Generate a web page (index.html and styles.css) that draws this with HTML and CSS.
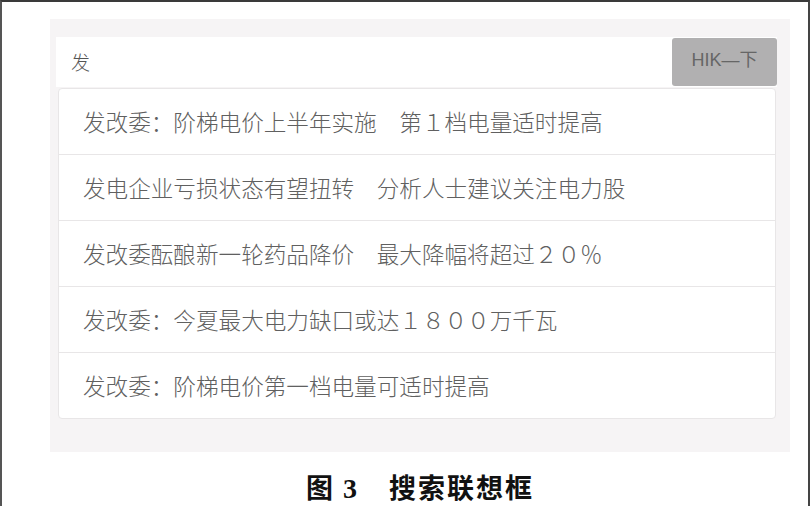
FILE: index.html
```html
<!DOCTYPE html>
<html lang="zh-CN">
<head>
    <meta charset="UTF-8">
    <title>搜索联想框</title>
    <link rel="stylesheet" href="styles.css">
</head>
<body>
    <!-- 图框 -->
    <div class="figure">
        <div class="panel">
            <!-- 搜索框 -->
            <div class="search-bar">
                <div class="search-input">发</div>
                <button class="search-btn">HIK—下</button>
            </div>
            <!-- 联想列表 -->
            <ul class="suggest-list">
                <li>发改委：阶梯电价上半年实施　第１档电量适时提高</li>
                <li>发电企业亏损状态有望扭转　分析人士建议关注电力股</li>
                <li>发改委酝酿新一轮药品降价　最大降幅将超过２０％</li>
                <li>发改委：今夏最大电力缺口或达１８００万千瓦</li>
                <li>发改委：阶梯电价第一档电量可适时提高</li>
            </ul>
        </div>
        <div class="caption"><span class="num">图 <b>3</b></span>搜索联想框</div>
    </div>
</body>
</html>
```

FILE: styles.css
```css
/* ページ全体 */
body {
    margin: 0;
    background: #fff;
    font-family: "Noto Sans CJK SC", sans-serif;
}

/* 图框 */
.figure {
    width: 810px;
    height: 506px;
    box-sizing: border-box;
    border-top: 2px solid #3a3a3a;
    border-left: 2px solid #555;
    border-right: 2px solid #444;
    padding: 17px 0 0 48px;
}

.panel {
    width: 740px;
    height: 433px;
    box-sizing: border-box;
    background-color: #f6f4f5;
    padding: 18px 13px 0 6px;
}

/* 搜索框 */
.search-bar {
    display: flex;
    height: 50px;
    background: #fff;
}

.search-input {
    flex: 1;
    padding-left: 15px;
    line-height: 50px;
    font-size: 19px;
    font-weight: 300;
    color: #555;
}

.search-btn {
    width: 105px;
    margin: 1px 0;
    border: none;
    border-radius: 3px;
    background-color: #b1b0b1;
    color: #666;
    font-family: "Liberation Sans", "Noto Sans CJK SC", sans-serif;
    font-size: 18px;
    line-height: 44px;
    padding: 0 0 4px;
}

/* 联想列表 */
.suggest-list {
    list-style: none;
    margin: 1px 1px 0 2px;
    padding: 0;
    background: #fff;
    border: 1px solid #e8e6e7;
    border-radius: 4px;
}

.suggest-list li {
    height: 65px;
    line-height: 65px;
    padding-left: 24px;
    font-size: 22.6px;
    font-weight: 300;
    color: #606060;
    border-top: 1px solid #e8e6e7;
}

.suggest-list li:first-child {
    border-top: none;
}

/* 标题 */
.caption {
    margin-top: 15px;
    margin-left: -48px;
    padding-left: 30px;
    text-align: center;
    font-size: 27px;
    font-weight: 700;
    color: #111;
    letter-spacing: 2px;
}

.caption .num {
    margin-right: 30px;
}

.caption b {
    font-family: "Liberation Serif", serif;
    font-size: 28px;
}
```
